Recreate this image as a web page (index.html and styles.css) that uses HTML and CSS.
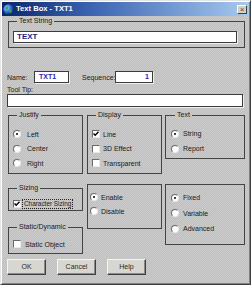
FILE: index.html
```html
<!DOCTYPE html>
<html>
<head>
<meta charset="utf-8">
<link rel="stylesheet" href="styles.css">
</head>
<body>
<div class="win">
  <div class="titlebar">
    <svg class="appicon" width="11" height="11" viewBox="0 0 11 11">
      <defs>
        <radialGradient id="gl" cx="35%" cy="35%" r="65%">
          <stop offset="0" stop-color="#9fd3ff"/>
          <stop offset="0.6" stop-color="#2a6fd0"/>
          <stop offset="1" stop-color="#0b2f7a"/>
        </radialGradient>
      </defs>
      <circle cx="5.5" cy="5.5" r="5.2" fill="url(#gl)"/>
      <path d="M2.5 3.2 L4.6 2.6 L5.4 4.2 L4.2 5.8 L3 5.2 Z" fill="#3aa040"/>
      <path d="M6.2 6.2 L8.6 5.6 L9 7.8 L7.2 9.4 L6.4 8 Z" fill="#3aa040"/>
    </svg>
    <span class="title">Text Box - TXT1</span>
    <span class="close">×</span>
  </div>
  <div class="content">
    <fieldset class="grp g-string">
      <legend>Text String</legend>
      <div class="field f-text">TEXT</div>
    </fieldset>

    <div class="namerow">
      <span class="lbl l-name">Name:</span>
      <div class="field f-name">TXT1</div>
      <span class="lbl l-seq">Sequence:</span>
      <div class="field f-seq">1</div>
    </div>

    <div class="lbl l-tip">Tool Tip:</div>
    <div class="field f-tip"></div>

    <div class="row1">
      <fieldset class="grp g-justify">
        <legend>Justify</legend>
        <div class="opt"><span class="radio on"></span><span>Left</span></div>
        <div class="opt"><span class="radio"></span><span>Center</span></div>
        <div class="opt"><span class="radio"></span><span>Right</span></div>
      </fieldset>
      <fieldset class="grp g-display">
        <legend>Display</legend>
        <div class="opt"><span class="check on"><svg width="6" height="6" viewBox="0 0 6 6"><path d="M0.5 2.5 L2.2 4.3 L5.5 0.8" fill="none" stroke="#000" stroke-width="1.4"/></svg></span><span>Line</span></div>
        <div class="opt"><span class="check"></span><span>3D Effect</span></div>
        <div class="opt"><span class="check"></span><span>Transparent</span></div>
      </fieldset>
      <fieldset class="grp g-textopt">
        <legend>Text</legend>
        <div class="opt"><span class="radio on"></span><span>String</span></div>
        <div class="opt"><span class="radio"></span><span>Report</span></div>
      </fieldset>
    </div>

    <div class="row2">
      <div class="col1">
        <fieldset class="grp g-sizing">
          <legend>Sizing</legend>
          <div class="opt"><span class="check on"><svg width="6" height="6" viewBox="0 0 6 6"><path d="M0.5 2.5 L2.2 4.3 L5.5 0.8" fill="none" stroke="#000" stroke-width="1.4"/></svg></span><span class="focus">Character Sizing</span></div>
        </fieldset>
        <fieldset class="grp g-static">
          <legend>Static/Dynamic</legend>
          <div class="opt"><span class="check"></span><span>Static Object</span></div>
        </fieldset>
      </div>
      <fieldset class="grp g-enable">
        <div class="opt"><span class="radio on"></span><span>Enable</span></div>
        <div class="opt"><span class="radio"></span><span>Disable</span></div>
      </fieldset>
      <fieldset class="grp g-fixed">
        <div class="opt"><span class="radio on"></span><span>Fixed</span></div>
        <div class="opt"><span class="radio"></span><span>Variable</span></div>
        <div class="opt"><span class="radio"></span><span>Advanced</span></div>
      </fieldset>
    </div>

    <div class="buttons">
      <div class="btn">OK</div>
      <div class="btn">Cancel</div>
      <div class="btn">Help</div>
    </div>
  </div>
</div>
</body>
</html>
```

FILE: styles.css
```css
html, body {
  margin: 0;
  padding: 0;
  background: #c6c6c6;
}

body {
  font-family: "Liberation Sans", Arial, sans-serif;
  font-size: 7px;
  color: #1a1a1a;
}

.win {
  width: 251px;
  height: 285px;
  box-sizing: border-box;
  border: 1px solid;
  border-color: #e4e4e4 #404040 #404040 #e4e4e4;
  padding: 1px;
  background-color: #c6c6c6;
  background-image: repeating-conic-gradient(#c0c0c0 0 25%, #cbcbcb 0 50%);
  background-size: 2px 2px;
  box-shadow: inset 1px 1px 0 #fff, inset -1px -1px 0 #808080;
}

.titlebar {
  height: 14px;
  display: flex;
  align-items: center;
  background: linear-gradient(90deg, #0a246a 0%, #3a62b0 35%, #a6caf0 100%);
}

.appicon {
  margin-left: 1px;
  flex: none;
}

.title {
  margin-left: 2px;
  color: #fff;
  font-weight: bold;
  font-size: 7.6px;
  line-height: 14px;
}

.close {
  margin-left: auto;
  margin-right: 2px;
  width: 10px;
  height: 9px;
  box-sizing: border-box;
  background: #d4d0c8;
  border: 1px solid;
  border-color: #fff #404040 #404040 #fff;
  color: #444;
  font-size: 8px;
  line-height: 7px;
  text-align: center;
}

.content {
  padding-left: 5px;
}

.grp {
  margin: 0;
  padding: 0;
  box-sizing: border-box;
  border: 1px solid #444;
  min-width: 0;
}

.grp legend {
  padding: 0 2px;
  margin-left: 4px;
  font-size: 7px;
  line-height: 8px;
  color: #1a1a1a;
}

.field {
  box-sizing: border-box;
  background: #fff;
  border: 1px solid #3c3c3c;
  box-shadow: 1px 1px 0 #eee;
}

.g-string {
  margin-top: 1px;
  margin-left: 1px;
  width: 237px;
  height: 31px;
  padding: 6px 0 0 4px;
}

.f-text {
  width: 224px;
  height: 12px;
  padding-left: 3px;
  font-weight: bold;
  font-size: 8px;
  line-height: 10px;
  color: #1c1c86;
}

.namerow {
  margin-top: 23px;
  display: flex;
  align-items: center;
  height: 12px;
}

.lbl {
  line-height: 9px;
}

.l-name {
  width: 27px;
}

.f-name {
  width: 35px;
  height: 12px;
  padding-left: 4px;
  color: #2424b4;
  font-weight: bold;
  font-size: 7px;
  line-height: 10px;
}

.l-seq {
  margin-left: 13px;
  width: 33px;
}

.f-seq {
  width: 38px;
  height: 12px;
  padding-right: 3px;
  text-align: right;
  color: #2424b4;
  font-weight: bold;
  line-height: 10px;
}

.l-tip {
  margin-top: 2px;
  height: 9px;
}

.f-tip {
  width: 236px;
  height: 13px;
}

.row1 {
  margin-top: 4px;
  margin-left: 1px;
  display: flex;
  align-items: flex-start;
}

.opt {
  display: flex;
  align-items: center;
  white-space: nowrap;
}

.radio {
  flex: none;
  width: 8px;
  height: 8px;
  box-sizing: border-box;
  border-radius: 50%;
  background: #fff;
  border: 1px solid;
  border-color: #6a6a6a #e8e8e8 #e8e8e8 #6a6a6a;
  display: flex;
  align-items: center;
  justify-content: center;
}

.radio.on::after {
  content: "";
  width: 2px;
  height: 2px;
  border-radius: 50%;
  background: #000;
}

.check {
  flex: none;
  width: 8px;
  height: 8px;
  box-sizing: border-box;
  background: #fff;
  border: 1px solid;
  border-color: #6a6a6a #e8e8e8 #e8e8e8 #6a6a6a;
  display: flex;
  align-items: center;
  justify-content: center;
}

.check svg {
  display: block;
}

.g-justify {
  width: 75px;
  height: 63px;
  padding: 8px 0 0 4px;
}

.g-justify .opt {
  height: 14.5px;
}

.g-justify .radio {
  margin-right: 6px;
}

.g-display {
  margin-left: 4px;
  width: 75px;
  height: 63px;
  padding: 8px 0 0 4px;
}

.g-display .opt {
  height: 14.5px;
}

.g-display .check {
  margin-right: 3px;
}

.g-textopt {
  margin-left: 3px;
  width: 80px;
  height: 48px;
  padding: 7px 0 0 5px;
}

.g-textopt .opt {
  height: 15px;
}

.g-textopt .radio,
.g-fixed .radio {
  margin-right: 4px;
}

.row2 {
  margin-top: 10px;
  margin-left: 1px;
  display: flex;
  align-items: flex-start;
}

.col1 {
  display: flex;
  flex-direction: column;
}

.g-sizing {
  width: 75px;
  height: 27px;
  padding: 6px 0 0 4px;
}

.g-sizing .opt {
  height: 12px;
}

.g-sizing .check {
  margin-right: 1px;
}

.focus {
  border: 1px dotted #222;
  padding: 0 1px;
  font-size: 6.4px;
  line-height: 8px;
}

.g-static {
  margin-top: 12px;
  width: 75px;
  height: 31px;
  padding: 7px 0 0 4px;
}

.g-static .opt {
  height: 12px;
}

.g-static .check {
  margin-right: 4px;
}

.g-enable {
  margin-left: 4px;
  width: 75px;
  height: 45px;
  padding: 5px 0 0 2px;
}

.g-enable .opt {
  height: 14px;
}

.g-enable .radio {
  margin-right: 3px;
}

.g-fixed {
  margin-left: 3px;
  width: 80px;
  height: 61px;
  padding: 5px 0 0 5px;
}

.g-fixed .opt {
  height: 15.5px;
}

.buttons {
  margin-top: 5px;
  display: flex;
  gap: 11px;
}

.btn {
  width: 39px;
  height: 16px;
  box-sizing: border-box;
  background: #d8d6d0;
  border: 1px solid;
  border-color: #f4f4f4 #404040 #404040 #f4f4f4;
  box-shadow: inset -1px -1px 0 #8a8a8a;
  text-align: center;
  line-height: 14px;
  color: #2a2a2a;
}
```
